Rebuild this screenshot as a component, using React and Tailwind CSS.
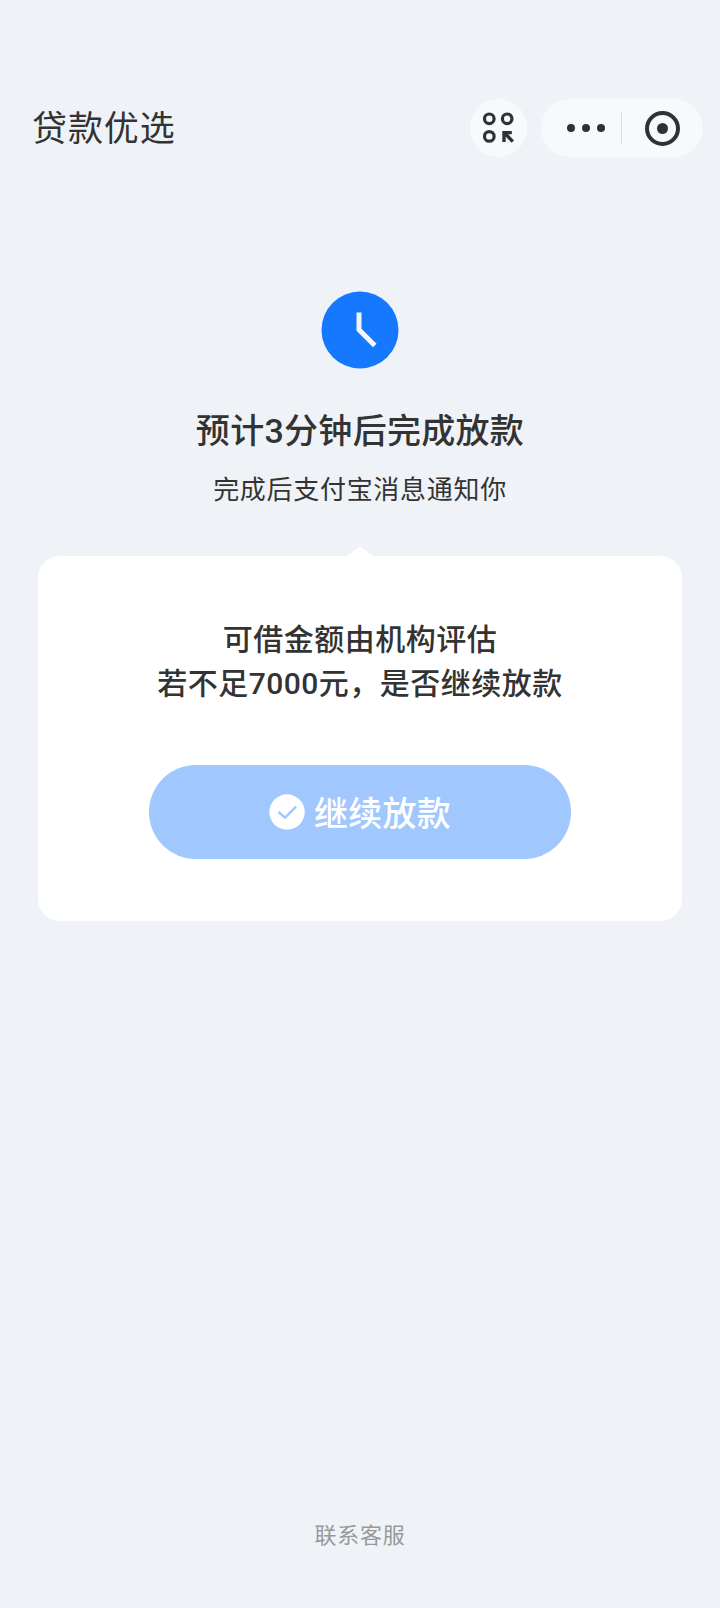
function GridIcon() {
  return (
    <svg className="w-8 h-8" viewBox="0 0 32 32" fill="none" stroke="#303133" strokeWidth="3.2">
      <circle cx="6.3" cy="6.8" r="4.8" />
      <circle cx="24.2" cy="6.8" r="4.8" />
      <circle cx="6.3" cy="24.4" r="4.8" />
      <path d="M28.800 20.600h-7.800v9.400M21.800 21.200l8 8.400" strokeWidth="3.400" />
    </svg>
  );
}

function Header() {
  return (
    <header className="flex items-center h-[58px] mt-[99px] pl-[32px] pr-[17px]">
      <h1 className="flex-1 pt-[3px] text-[35px] leading-[55px] tracking-[0.9px] text-[#333]">贷款优选</h1>

      <button className="w-[57px] h-[58px] rounded-full bg-[#f7f9fb] flex items-center justify-center">
        <GridIcon />
      </button>

      <div className="w-[162px] h-[58px] ml-[14px] rounded-full bg-[#f7f9fb] flex items-center">
        <button className="w-20 pl-[10px] flex justify-center gap-[7px]">
          <span className="w-2 h-2 rounded-full bg-[#303133]"></span>
          <span className="w-2 h-2 rounded-full bg-[#303133]"></span>
          <span className="w-2 h-2 rounded-full bg-[#303133]"></span>
        </button>
        <span className="w-px h-8 bg-[#dcdee1]"></span>
        <button className="flex-1 flex justify-center">
          <span className="w-[35px] h-[35px] rounded-full border-4 border-[#303133] flex items-center justify-center">
            <span className="w-[11px] h-[11px] rounded-full bg-[#303133]"></span>
          </span>
        </button>
      </div>
    </header>
  );
}

export default function App() {
  return (
    <div className="w-full h-[1608px] flex flex-col bg-[#eff3f8] text-[#333] font-[Roboto,'Noto_Sans_CJK_SC',sans-serif]">
      <Header />

      {/* Status */}
      <section className="flex flex-col items-center mt-[133.5px] text-center">
        <svg className="w-[78px] h-[78px]" viewBox="0 0 78 78" fill="none">
          <circle cx="39" cy="39" r="38.5" fill="#1677ff" />
          <path d="M38 21.5v17.2l15.8 15.8" stroke="#f2f6fc" strokeWidth="5" />
        </svg>
        <h2 className="mt-[37.5px] text-[34px] leading-[50px] tracking-[0.3px] font-medium">预计3分钟后完成放款</h2>
        <p className="mt-[14px] text-[26px] leading-10 tracking-[0.7px]">完成后支付宝消息通知你</p>
      </section>

      {/* Confirm card */}
      <section className="relative mx-[38px] mt-[46px] h-[365px] rounded-[22px] bg-white flex flex-col items-center">
        <svg className="absolute -top-[9px] left-1/2 -translate-x-1/2 w-8 h-[10px]" viewBox="0 0 32 10">
          <path d="M0 10C3 9 5 8 8 5.500L13 1.500Q16-1 19 1.500L24 5.500C27 8 29 9 32 10z" fill="#fff" />
        </svg>
        <p className="mt-[62px] text-center text-[30px] leading-[43.5px] tracking-[0.5px] font-medium">
          可借金额由机构评估
          <br />
          若不足7000元，是否继续放款
        </p>
        <button className="mt-[60px] w-[422px] h-[94px] rounded-full bg-[#a1c7ff] flex items-center justify-center gap-[9px] text-white">
          <svg className="w-9 h-9" viewBox="0 0 36 36" fill="none">
            <circle cx="18" cy="18" r="17.700" fill="#fff" />
            <path d="M9.500 18l6.600 5.600L27 12.600" stroke="#a1c7ff" strokeWidth="2.400" />
          </svg>
          <span className="pt-[3px] text-[34px] leading-[50px] tracking-[0.3px] font-medium">继续放款</span>
        </button>
      </section>

      <footer className="mt-auto pb-[55px] text-center text-[22px] leading-[34px] tracking-[0.8px] text-[#999]">
        联系客服
      </footer>
    </div>
  );
}
